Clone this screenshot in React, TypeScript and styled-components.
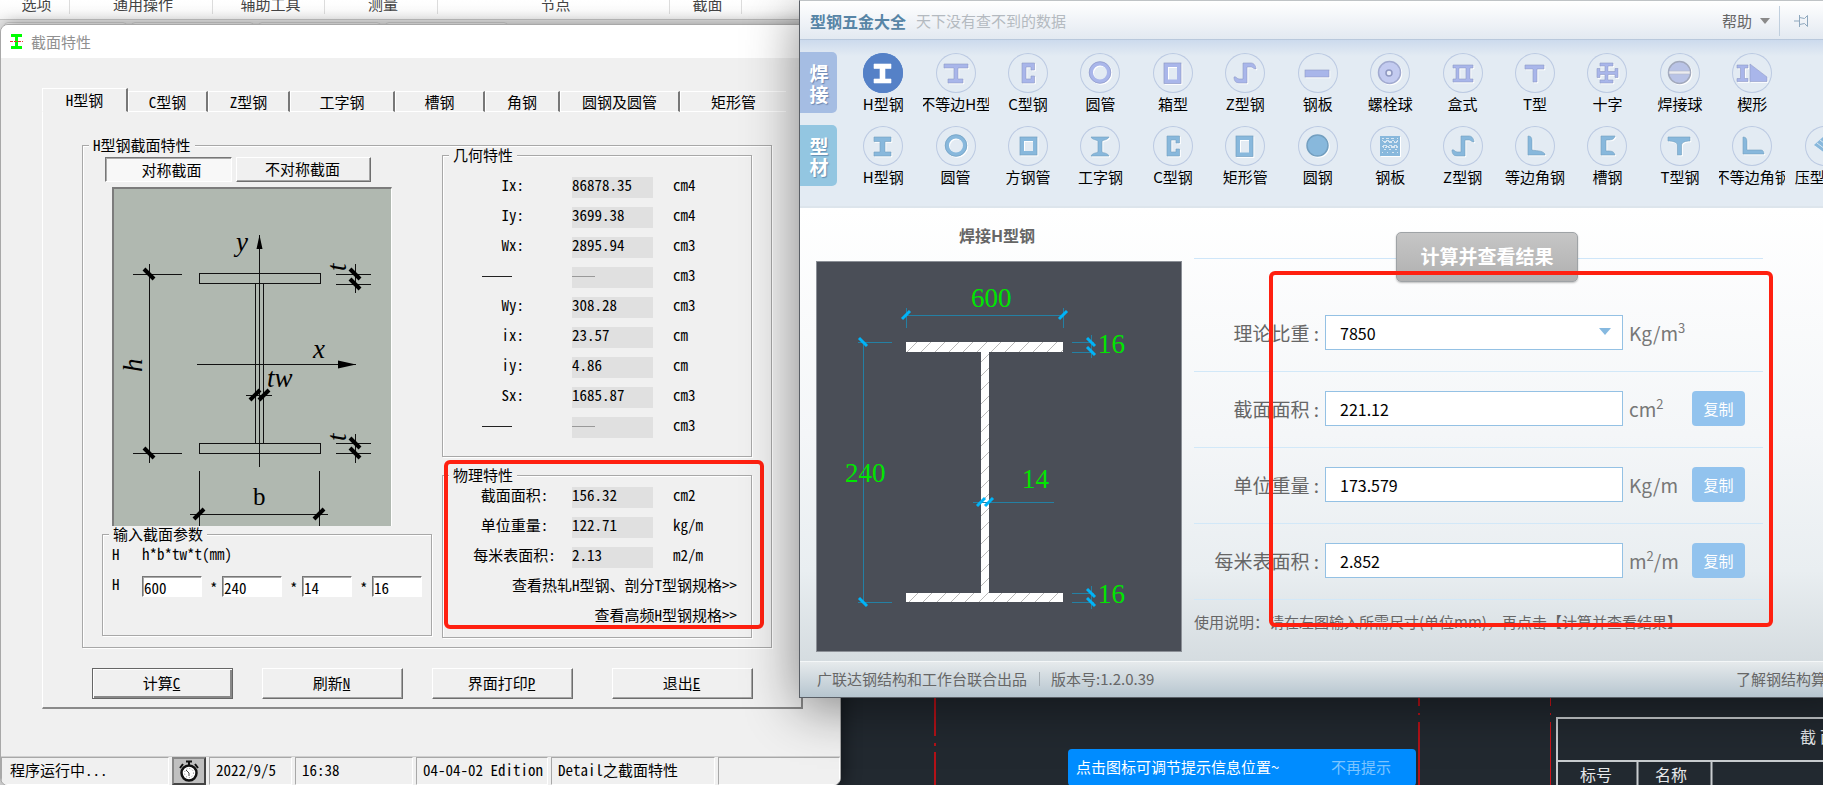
import React, { ReactNode } from "react";
import styled, { createGlobalStyle, css } from "styled-components";

const mono = `"Noto Sans Mono CJK SC", "Liberation Mono", "Noto Sans CJK SC", monospace`;
const sans = `"Noto Sans CJK SC", "Open Sans", sans-serif`;

const GlobalStyle = createGlobalStyle`
  *, *::before, *::after { box-sizing: border-box; }
  body { margin: 0; overflow: hidden; background: #222930; }
  button, input, select { font: inherit; color: inherit; margin: 0; }
  button { cursor: pointer; }
`;

/* ---------- desktop ---------- */

const Desktop = styled.main`
  position: relative;
  height: 100vh;
  overflow: hidden;
  background: #222930;
  font-family: ${sans};
  font-size: 15px;
  line-height: 20px;
`;

const HostApp = styled.div`
  position: absolute;
  left: 0;
  top: 0;
  bottom: 0;
  width: 569px;
  background: #d9d9d9;
`;

const Ribbon = styled.nav`
  position: absolute;
  left: 0;
  top: 0;
  width: 799px;
  height: 30px;
  background: #e6e6e6;
`;

const RibbonGroups = styled.div`
  display: grid;
  grid-template-columns: 70px 143px 112px 113px 232px 72px 1fr;
  height: 20px;
  overflow: hidden;
  background: linear-gradient(#fff, #f8f8f8);
  border-bottom: 1px solid #c8c8c8;
`;

const RibbonGroup = styled.span`
  height: 14px;
  padding-left: 4px;
  border-right: 1px solid #dcdcdc;
  text-align: center;
  line-height: 8px;
  color: #444;
  &:last-child { border: 0; }
`;

const DocTabs = styled.div`
  display: flex;
  gap: 4px;
  padding: 2px 4px 0;
`;

const DocTab = styled.span`
  width: 123px;
  height: 8px;
  border: 1px solid #cfcfcf;
  border-radius: 4px 4px 0 0;
  background: #f2f2f2;
`;

/* ---------- section property window ---------- */

const PropertyWindow = styled.section`
  position: absolute;
  left: 0;
  top: 24px;
  width: 841px;
  background: #f0f0f0;
  border: 1px solid #a8a8a8;
  border-radius: 8px;
  box-shadow: 4px 0 16px rgba(0, 0, 0, 0.4);
  overflow: hidden;
  font-family: ${mono};
  font-size: 15px;
  line-height: 16px;
  color: #000;
`;

const PropertyTitle = styled.header`
  display: flex;
  align-items: center;
  gap: 8px;
  height: 33px;
  padding-left: 9px;
  background: #fff;
  font-family: ${sans};
  color: #909090;
`;

const TabStrip = styled.div`
  display: grid;
  grid-template-columns: 86px 80px 82px 105px 90px 75px 120px 106px;
  align-items: end;
  height: 24px;
  margin: 30px 0 0 41px;
`;

const TabButton = styled.button<{ $active?: boolean }>`
  height: ${(p) => (p.$active ? 24 : 21)}px;
  padding: 0;
  border: 0;
  border-top: 1px solid #fff;
  border-left: 1px solid #fff;
  border-right: 2px solid #777;
  border-bottom: 1px solid ${(p) => (p.$active ? "#f0f0f0" : "#fff")};
  background: #f0f0f0;
  &:last-child { border-right: 0; }
`;

const TabPanel = styled.div`
  width: 761px;
  margin: 0 0 47px 41px;
  padding: 25px 29px 8px 39px;
  border-left: 1px solid #fff;
  border-right: 2px solid #8a8a8a;
  border-bottom: 2px solid #8a8a8a;
`;

const Group = styled.fieldset`
  min-width: 0;
  margin: 0;
  padding: 0;
  border: 1px solid #a8a8a8;
  box-shadow: 1px 1px 0 #fff, inset 1px 1px 0 #fff;
`;

const GroupBody = styled.div<{ $pad: string }>`
  padding: ${(p) => p.$pad};
`;

const GroupLegend = styled.legend`
  margin-left: 6px;
  padding: 0 4px;
  background: #f0f0f0;
  line-height: 16px;
`;

const Columns = styled.div`
  display: grid;
  grid-template-columns: 330fr 310fr;
  gap: 10px;
`;

const LeftColumn = styled.div`
  padding-top: 4px;
`;

const RightColumn = styled.div`
  display: flex;
  flex-direction: column;
  gap: 10px;
  margin-top: -6px;
`;

const Modes = styled.div`
  display: flex;
  gap: 4px;
  margin-left: 3px;
`;

const raised = css`
  border: 1px solid;
  border-color: #fff #6e6e6e #6e6e6e #fff;
  box-shadow: inset -1px -1px 0 #a5a5a5;
  background: #f0f0f0;
`;

const sunken = css`
  border: 1px solid;
  border-color: #777 #fff #fff #777;
  box-shadow: inset 1px 1px 0 #aaa;
`;

const ModeButton = styled.button<{ $on?: boolean }>`
  width: ${(p) => (p.$on ? 127 : 135)}px;
  height: 25px;
  padding: ${(p) => (p.$on ? "0 0 0 6px" : "0 2px 2px 0")};
  ${(p) => (p.$on ? css`${sunken} background: #f8f8f8;` : raised)}
`;

const Picture = styled.div`
  width: 280px;
  height: 339px;
  margin: 5px 0 0 10px;
  background: #b0b8b0;
  border-left: 2px solid #7c7c7c;
  border-top: 2px solid #7c7c7c;
  border-right: 1px solid #fff;
  svg { display: block; margin: -2px 0 0 -2px; }
`;

const ParamHint = styled.div`
  display: grid;
  grid-template-columns: 30px 1fr;
  margin-bottom: 14px;
`;

const ParamRow = styled.div`
  display: flex;
  height: 22px;
  > span { width: 30px; }
  > label { display: flex; }
  > label + label::before {
    content: "*";
    width: 20px;
    padding: 4px 0 0 8px;
  }
`;

const ParamInput = styled.input<{ $w: number }>`
  width: ${(p) => p.$w}px;
  height: 21px;
  padding: 2px 0 0 1px;
  border-radius: 0;
  outline: 0;
  ${sunken}
  background: #fff;
`;

const PropRow = styled.div`
  display: grid;
  grid-template-columns: 129px 81px 1fr;
  height: 21px;
  margin-bottom: 9px;
`;

const PropLabel = styled.label<{ $centered?: boolean }>`
  padding: ${(p) => (p.$centered ? "0 0 0 14px" : "0 48px 0 0")};
  text-align: ${(p) => (p.$centered ? "center" : "right")};
  white-space: nowrap;
`;

const PropValue = styled.output`
  background: #e0e0e0;
`;

const PropUnit = styled.span`
  padding-left: 20px;
`;

const Dash = styled.span<{ $w: number; $label?: boolean }>`
  display: inline-block;
  width: ${(p) => p.$w}px;
  height: 1px;
  margin-right: ${(p) => (p.$label ? 12 : 0)}px;
  vertical-align: 4px;
  background: ${(p) => (p.$label ? "#222" : "#999")};
`;

const SpecLink = styled.a`
  display: block;
  height: 30px;
  padding-right: 14px;
  text-align: right;
  text-decoration: none;
  color: #000;
`;

const Actions = styled.div`
  display: flex;
  gap: 29px;
  margin: 20px 0 0 10px;
`;

const ActionButton = styled.button<{ $primary?: boolean; $last?: boolean }>`
  width: 141px;
  height: 31px;
  margin-left: ${(p) => (p.$last ? 10 : 0)}px;
  padding: 0 2px 2px 0;
  ${raised}
  ${(p) => p.$primary && css`border-color: #666; box-shadow: inset 1px 1px 0 #fff, inset -2px -2px 0 #888;`}
`;

const StatusBar = styled.footer`
  display: grid;
  grid-template-columns: 168px 34px 83px 118px 132px 164px 1fr;
  column-gap: 3px;
  height: 29px;
  border-top: 1px solid #d0d0d0;
`;

const StatusCell = styled.span`
  padding: 4px 0 0 6px;
  border-top: 1px solid #a8a8a8;
  border-left: 1px solid #a8a8a8;
  border-right: 1px solid #fff;
  border-bottom: 1px solid #fff;
  white-space: nowrap;
  &:first-child { padding-left: 8px; }
`;

const StatusClock = styled.span`
  display: grid;
  place-items: center;
  background: #c0c0c0;
  border: 2px solid;
  border-color: #888 #444 #444 #888;
`;

/* ---------- steel catalogue window ---------- */

const CatalogWindow = styled.section`
  position: absolute;
  left: 799px;
  right: -38px;
  top: 0;
  border: 1px solid #5a5f66;
  border-top-color: #bfc3c6;
  border-right: 0;
  background: #fff;
  box-shadow: 0 10px 50px rgba(0, 0, 0, 0.45);
  color: #666;
`;

const CatalogTitle = styled.header`
  display: flex;
  align-items: center;
  height: 39px;
  padding: 1px 38px 0 10px;
  background: linear-gradient(#fff, #e3e9f1);
  border-bottom: 1px solid #b9c8dc;
`;

const AppName = styled.h1`
  margin: 0 10px 0 0;
  font-size: 16px;
  color: #5785a6;
`;

const Slogan = styled.span`
  flex: 1;
  color: #b4bac0;
`;

const HelpButton = styled.button`
  display: flex;
  align-items: center;
  gap: 8px;
  padding: 0 9px 0 0;
  border: 0;
  background: none;
`;

const PinButton = styled.button`
  display: flex;
  align-items: center;
  height: 30px;
  padding: 0 14px;
  border: 0;
  border-left: 1px solid #c0cfde;
  background: none;
`;

const Toolbar = styled.div`
  display: grid;
  gap: 12px;
  padding: 12px 0 20px;
  background: linear-gradient(#ccdaed, #e3ebf3 16px);
  border-bottom: 2px solid #dde5ec;
`;

const ToolRow = styled.div`
  display: flex;
  height: 61px;
`;

const Category = styled.button<{ $bg: string }>`
  width: 37px;
  margin-right: 10px;
  padding: 0 8px 0 9px;
  border: 0;
  border-radius: 0 5px 5px 0;
  background: ${(p) => p.$bg};
  color: #fff;
  font-size: 19px;
  font-weight: 700;
  line-height: 21px;
  text-shadow: 1px 1px 1px rgba(40, 70, 120, 0.45);
`;

const Tools = styled.div`
  flex: 1;
  display: grid;
  grid-template-columns: repeat(14, 1fr);
`;

const Tool = styled.button`
  display: flex;
  flex-direction: column;
  align-items: center;
  padding: 1px 0 0;
  border: 0;
  background: none;
  color: #000;
`;

const ToolCircle = styled.span<{ $active?: boolean }>`
  width: 40px;
  height: 40px;
  border-radius: 50%;
  box-shadow: inset 0 0 0 1px ${(p) => (p.$active ? "#5581c7" : "#bccae2")};
  background: ${(p) => (p.$active ? "#5581c7" : "none")};
  svg { display: block; filter: ${(p) => (p.$active ? "none" : "drop-shadow(1px 1px 0 #fff)")}; }
`;

const ToolLabel = styled.span`
  display: flex;
  justify-content: center;
  width: 66px;
  margin-top: 2px;
  overflow: hidden;
  line-height: 18px;
  white-space: nowrap;
`;

const Workspace = styled.div`
  display: flex;
  padding: 17px 98px 9px 16px;
  background: linear-gradient(#fff 0%, #f4f6f8 50%, #e9eef1 80%, #d5dce0 100%);
`;

const Preview = styled.div`
  width: 366px;
  margin-right: 12px;
`;

const PreviewTitle = styled.h2`
  margin: 0 0 16px;
  padding-right: 4px;
  font-size: 16px;
  line-height: 20px;
  text-align: center;
`;

const Canvas = styled.div`
  height: 391px;
  background: #4a4e57;
  box-shadow: inset 0 0 0 1px #8b8f96;
  svg { display: block; }
`;

const Calculator = styled.form`
  flex: 1;
  padding-top: 7px;
`;

const CalcHeader = styled.div`
  display: flex;
  justify-content: center;
  margin-bottom: 14px;
  padding-left: 17px;
  background: linear-gradient(#cfe6f9, #cfe6f9) 0 26px / 100% 1px no-repeat;
`;

const CalcButton = styled.button`
  width: 182px;
  height: 50px;
  padding: 0 0 2px;
  border: 1px solid #9fa3a6;
  border-radius: 5px;
  background: linear-gradient(#c6c6c6, #b0b0b0);
  box-shadow: 0 1px 2px rgba(0, 0, 0, 0.25);
  color: #fff;
  font-size: 19px;
  font-weight: 700;
`;

const FieldRow = styled.div`
  display: flex;
  align-items: center;
  height: 76px;
  border-bottom: 1px solid #d2e8f8;
  padding: 0 18px 2px 0;
  font-size: 19px;
`;

const FieldLabel = styled.label`
  width: 131px;
  padding-right: 6px;
  text-align: right;
  white-space: pre;
`;

const fieldBox = css`
  width: 100%;
  height: 35px;
  padding: 0 14px;
  border: 1px solid #94c1e4;
  border-radius: 0;
  outline: 0;
  background: #fff;
  color: #000;
  font-size: 16px;
`;

const FieldWrap = styled.div`
  position: relative;
  flex: 1;
  svg { position: absolute; right: 12px; top: 13px; pointer-events: none; }
`;

const FieldInput = styled.input`${fieldBox}`;
const FieldSelect = styled.select`${fieldBox} appearance: none;`;

const FieldUnit = styled.span`
  width: 69px;
  padding-left: 6px;
  color: #777;
  sup { font-size: 13px; line-height: 0; vertical-align: 8px; }
`;

const CopySlot = styled.div`
  width: 53px;
`;

const CopyButton = styled.button`
  width: 53px;
  height: 35px;
  padding: 0;
  border: 0;
  border-radius: 4px;
  background: #92c3ee;
  color: #fff;
  font-size: 15px;
`;

const Note = styled.p`
  margin: 12px 0 0;
  white-space: nowrap;
`;

const CatalogFooter = styled.footer`
  display: flex;
  align-items: center;
  height: 36px;
  padding: 0 35px 2px 17px;
  border-top: 1px solid #f4f7f8;
  background: linear-gradient(#e6eaec, #b6c5cf);
`;

const Version = styled.span`
  flex: 1;
  margin-left: 12px;
  padding-left: 11px;
  border-left: 1px solid #a5adb3;
  line-height: 14px;
`;

const FooterLink = styled.a`
  color: #666;
  text-decoration: none;
`;

/* ---------- overlays ---------- */

const Highlight = styled.div<{ $x: number; $y: number; $w: number; $h: number }>`
  position: absolute;
  left: ${(p) => p.$x}px;
  top: ${(p) => p.$y}px;
  width: ${(p) => p.$w}px;
  height: ${(p) => p.$h}px;
  border: 4px solid #ff2010;
  border-radius: 6px;
  pointer-events: none;
`;

const CadDrawing = styled.svg`
  position: absolute;
  left: 841px;
  top: 698px;
`;

const Toast = styled.div`
  position: absolute;
  left: 1068px;
  top: 749px;
  display: flex;
  align-items: center;
  justify-content: space-between;
  width: 348px;
  height: 37px;
  padding: 0 25px 2px 8px;
  border-radius: 4px;
  background: #008cff;
  color: #fff;
`;

const ToastDismiss = styled.button`
  padding: 0;
  border: 0;
  background: none;
  color: #7cc4ff;
`;

/* ---------- icons ---------- */

type IconKind =
  | "h" | "hUneven" | "c" | "ring" | "box" | "z" | "plate" | "bolt" | "double" | "t" | "cross"
  | "ball" | "wedge" | "square" | "i" | "disc" | "mesh" | "l" | "channel" | "tRolled" | "lShort" | "sheet";

const meshDots = Array.from({ length: 90 }, (_, i) => [12 + ((i * 37) % 16), 12 + ((i * i * 5 + i * 3) % 17)]);

function glyph(kind: IconKind, c: string, edge: string): ReactNode {
  const f = { fill: c, stroke: edge, strokeWidth: 0.6 };
  const s = { fill: "none", stroke: c, strokeWidth: 4 };
  switch (kind) {
    case "h": return <path {...f} d="M11 11h17v4.500h-6v10.500h6v4H11v-4h6V15.500h-6z" />;
    case "hUneven": return <path {...f} d="M8 11h24v4H22v11h5v4H12v-4h6V15H8z" />;
    case "c": return <path {...f} d="M14 10h12.500v7H23v-3h-5v12h5v-3h3.500v7H14z" />;
    case "ring": return <><circle cx="20" cy="19.500" r="9" {...s} /><circle cx="20" cy="19.500" r="10.800" fill="none" stroke={edge} strokeWidth=".7" /></>;
    case "box": return <><rect x="13" y="12" width="13" height="16.500" {...s} /><rect x="11" y="10" width="17" height="20.500" fill="none" stroke={edge} strokeWidth=".7" /></>;
    case "square": return <><rect x="14" y="13" width="13" height="14" {...s} /><rect x="12" y="11" width="17" height="18" fill="none" stroke={edge} strokeWidth=".7" /></>;
    case "z": return <path {...f} d="M9 24c2-1 3 2 5 2h4V10h8c3 0 5 3 5 6-3 0-3-2-5-2h-4v16h-8c-3 0-5-2-5-6z" />;
    case "plate": return <rect x="7" y="17" width="24" height="7" {...f} />;
    case "bolt": return <><circle cx="19.500" cy="19.500" r="11" fill="#c3cbf0" stroke="#a2abd0" strokeWidth="1.500" /><circle cx="19" cy="20" r="3" fill="#e8ecf8" stroke="#8f98c0" strokeWidth="1.500" /></>;
    case "double": return <path {...f} d="M10 12h20v3h-3v11h3v3H10v-3h3V15h-3zM16 15v11h7V15z" fillRule="evenodd" />;
    case "t": return <path {...f} d="M10 12h19v4h-7v13h-4V16h-8z" />;
    case "tRolled": return <path {...f} d="M8 11h22v4c-4 0-8 1-8.500 4v10h-4V19c-.5-3-5-4-9.500-4z" />;
    case "cross": return <path {...f} d="M13 10h13v3h-5v5.500h7v-3h3v9h-3v-3h-7V27h5v3H13v-3h5v-5.500h-5v3h-3v-9h3v3h5V13h-5z" />;
    case "ball": return <><circle cx="19.500" cy="19.500" r="11" fill="#b9c3e6" stroke="#a2a9bc" strokeWidth="1.500" /><path d="M9 18h21v3H9z" fill="#ececf0" stroke="#b4bacb" strokeWidth=".6" /></>;
    case "wedge": return <path {...f} d="M5 12h11v3h-3.500v10.500H16v3H5v-3h3.500V15H5zM18 11l17 13v4.500H18z" />;
    case "i": return <path {...f} d="M11 11h18c-1 3-6 3-7 4v11c1 1 6 1 7 4H11c1-3 6-3 7-4V15c-1-1-6-1-7-4z" />;
    case "disc": return <circle cx="19.500" cy="19.500" r="10.500" {...f} strokeWidth="1.500" />;
    case "mesh": return <><rect x="10" y="10" width="20" height="20" fill={c} />{meshDots.map(([x, y], i) => <rect key={i} x={x} y={y} width="1" height="1" fill="#d6e6f2" />)}</>;
    case "l": return <path {...f} d="M13 10c3 0 4 2 4 4v10c3 1 10 0 13 4v1H13z" />;
    case "lShort": return <path {...f} d="M11 11c3 0 4 2 4 4v9h14c2 0 3 2 3 4H11z" />;
    case "channel": return <path {...f} d="M14 10h14c-1 4-4 4-9 4v11c5 0 8 0 9 4H14z" />;
    case "sheet": return <><path d="M9 19l10-9 16 12-10 9z" fill={c} /><path d="M12 17l16 12M15 14l16 12M18 11l16 12" stroke="#d6e6f2" strokeWidth="1" /></>;
  }
}

function ToolItem({ kind, label, rolled, active }: { kind: IconKind; label: string; rolled?: boolean; active?: boolean }) {
  const color = active ? "#fff" : rolled ? "#88b8dc" : "#a9b6ea";
  const edge = active ? "#fff" : rolled ? "#739fc0" : "#8f9ac6";
  return (
    <Tool type="button">
      <ToolCircle $active={active}>
        <svg width="40" height="40" aria-hidden="true">{glyph(kind, color, edge)}</svg>
      </ToolCircle>
      <ToolLabel>{label}</ToolLabel>
    </Tool>
  );
}

const welded: [IconKind, string][] = [
  ["h", "H型钢"], ["hUneven", "不等边H型"], ["c", "C型钢"], ["ring", "圆管"], ["box", "箱型"], ["z", "Z型钢"], ["plate", "钢板"],
  ["bolt", "螺栓球"], ["double", "盒式"], ["t", "T型"], ["cross", "十字"], ["ball", "焊接球"], ["wedge", "楔形"],
];

const rolledSteel: [IconKind, string][] = [
  ["h", "H型钢"], ["ring", "圆管"], ["square", "方钢管"], ["i", "工字钢"], ["c", "C型钢"], ["box", "矩形管"], ["disc", "圆钢"],
  ["mesh", "钢板"], ["z", "Z型钢"], ["l", "等边角钢"], ["channel", "槽钢"], ["tRolled", "T型钢"], ["lShort", "不等边角钢"], ["sheet", "压型钢板"],
];

/* ---------- drawings ---------- */

function Ticks({ at, back, size = 6 }: { at: [number, number][]; back?: boolean; size?: number }) {
  return <>{at.map(([x, y], i) => (
    <path key={i} d={back ? `M${x - size} ${y - size}l${size * 2} ${size * 2}` : `M${x - size} ${y + size}l${size * 2} ${-size * 2}`} />
  ))}</>;
}

function SectionSketch() {
  return (
    <svg width="278" height="339" fontFamily='"Liberation Serif", serif' fontSize="27" fontStyle="italic">
      <g fill="none" stroke="#111" strokeWidth="1" shapeRendering="crispEdges">
        <path d="M147.500 48V280M87.500 86.500h121v10h-121zM87.500 256.500h121v10h-121zM143.500 97V256M151.500 97V256" />
        <path d="M37.500 77V276M21 87.500H70M21 266.500H70M85 177.500H244M134 208.500H160" />
        <path d="M243.500 77V106M224 87.500H259M224 97.500H259M243.500 247V276M224 256.500H259M224 266.500H259" />
        <path d="M78 327.500H216M87.500 284V339M207.500 284V339" />
      </g>
      <path d="M147.500 48l3 14h-6zM244 177.500l-18 4v-8z" />
      <g stroke="#000" strokeWidth="4">
        <Ticks back size={5} at={[[37, 87], [37, 266], [243, 87], [243, 97], [243, 256], [243, 266]]} />
        <Ticks size={5} at={[[143, 208], [152, 208], [87, 327], [207, 327]]} />
      </g>
      <text x="124" y="64">y</text>
      <text x="201" y="171">x</text>
      <text x="155" y="200">tw</text>
      <text x="141" y="318" fontStyle="normal" fontSize="25">b</text>
      <text transform="translate(30 185) rotate(-90)">h</text>
      <text transform="translate(234 84) rotate(-90)">t</text>
      <text transform="translate(234 254) rotate(-90)">t</text>
    </svg>
  );
}

function SteelPreview() {
  return (
    <svg width="366" height="391" fontFamily='"Liberation Serif", serif' fontSize="27">
      <defs>
        <pattern id="hatch" width="14" height="14" patternUnits="userSpaceOnUse">
          <rect width="14" height="14" fill="#fff" />
          <path d="M-1 15L15 -1" stroke="#b8b8b8" strokeWidth="1" />
        </pattern>
      </defs>
      <path d="M90 81h157v10h-74v241h74v9H90v-9h75V91H90z" fill="url(#hatch)" />
      <g fill="none" stroke="#2480a4" strokeWidth="1" shapeRendering="crispEdges">
        <path d="M90 54.500H247M90.500 47V67M247.500 47V67M47.500 81V341M42 81.500H76M42 341.500H76" />
        <path d="M256 81.500H278M256 91.500H278M275.500 74V97M256 332.500H278M256 341.500H278M275.500 325V348M157 241.500H238" />
      </g>
      <g stroke="#00b4f8" strokeWidth="3">
        <Ticks size={4} at={[[90, 54], [247, 54], [165, 241], [173, 241]]} />
        <Ticks back size={4} at={[[47, 81], [47, 341], [275, 81], [275, 90], [275, 332], [275, 341]]} />
      </g>
      <g fill="#00e600">
        <text x="155" y="46">600</text>
        <text x="29" y="221">240</text>
        <text x="206" y="227">14</text>
        <text x="282" y="92">16</text>
        <text x="282" y="342">16</text>
      </g>
    </svg>
  );
}

function CadTable() {
  return (
    <CadDrawing width="982" height="87" fontFamily={sans}>
      <g stroke="#b51218" strokeWidth="2" fill="none">
        <path d="M94 0V38M94 45v3M94 54V87M578 0V8M578 15v2M578 24V87" />
        <path d="M709.500 0V8M709.500 15v2M709.500 24V87" strokeWidth="1" stroke="#d0141a" />
      </g>
      <path d="M982 20H716V87M716 63H982M796.500 63V87M870.500 63V87" stroke="#c9cdd0" strokeWidth="2" fill="none" />
      <g fill="#e6e8ea" fontSize="16">
        <text x="959" y="45">截</text>
        <text x="979" y="45">面</text>
        <text x="739" y="83">标号</text>
        <text x="814" y="83">名称</text>
      </g>
    </CadDrawing>
  );
}

/* ---------- data ---------- */

const geometry: [string, string, string][] = [
  ["Ix:", "86878.35", "cm4"], ["Iy:", "3699.38", "cm4"], ["Wx:", "2895.94", "cm3"], ["", "", "cm3"], ["Wy:", "308.28", "cm3"],
  ["ix:", "23.57", "cm"], ["iy:", "4.86", "cm"], ["Sx:", "1685.87", "cm3"], ["", "", "cm3"],
];

const physics: [string, string, string][] = [
  ["截面面积:", "156.32", "cm2"], ["单位重量:", "122.71", "kg/m"], ["每米表面积:", "2.13", "m2/m"],
];

const results: [string, string, ReactNode][] = [
  ["截面面积", "221.12", <>cm<sup>2</sup></>],
  ["单位重量", "173.579", <>Kg/m</>],
  ["每米表面积", "2.852", <>m<sup>2</sup>/m</>],
];

const params: [string, string, number][] = [["h", "600", 60], ["b", "240", 60], ["tw", "14", 50], ["t", "16", 50]];

function PropList({ rows, centered, name }: { rows: [string, string, string][]; centered?: boolean; name: string }) {
  return <>{rows.map(([label, value, unit], i) => (
    <PropRow key={i}>
      <PropLabel $centered={centered} htmlFor={`${name}-${i}`}>{label || <Dash $w={30} $label />}</PropLabel>
      <PropValue id={`${name}-${i}`}>{value || <Dash $w={23} />}</PropValue>
      <PropUnit>{unit}</PropUnit>
    </PropRow>
  ))}</>;
}

export default function App() {
  return (
    <Desktop>
      <GlobalStyle />
      <HostApp />
      <Ribbon>
        <RibbonGroups>
          {["选项", "通用操作", "辅助工具", "测量", "节点", "截面", ""].map((t, i) => <RibbonGroup key={i}>{t}</RibbonGroup>)}
        </RibbonGroups>
        <DocTabs><DocTab /><DocTab /><DocTab /><DocTab /></DocTabs>
      </Ribbon>
      <CadTable />

      <PropertyWindow>
        <PropertyTitle>
          <svg width="13" height="16" aria-hidden="true">
            <path d="M1 0h11v3H8v9h4v3H1v-3h4V3H1z" fill="#0f0" />
            <path d="M0 7.500h13" stroke="#f03030" strokeDasharray="3 1" />
          </svg>
          截面特性
        </PropertyTitle>
        <TabStrip role="tablist">
          {["H型钢", "C型钢", "Z型钢", "工字钢", "槽钢", "角钢", "圆钢及圆管", "矩形管"].map((t, i) => (
            <TabButton key={t} type="button" role="tab" aria-selected={i === 0} $active={i === 0}>{t}</TabButton>
          ))}
        </TabStrip>
        <TabPanel role="tabpanel">
          <Group>
            <GroupLegend>H型钢截面特性</GroupLegend>
            <GroupBody $pad="0 19px 9px">
              <Columns>
                <LeftColumn>
                  <Modes>
                    <ModeButton type="button" $on>对称截面</ModeButton>
                    <ModeButton type="button">不对称截面</ModeButton>
                  </Modes>
                  <Picture><SectionSketch /></Picture>
                  <Group>
                    <GroupLegend>输入截面参数</GroupLegend>
                    <GroupBody $pad="4px 9px 37px">
                      <ParamHint><span>H</span><span>h*b*tw*t(mm)</span></ParamHint>
                      <ParamRow>
                        <span>H</span>
                        {params.map(([name, value, w]) => (
                          <label key={name}><ParamInput aria-label={name} defaultValue={value} $w={w} /></label>
                        ))}
                      </ParamRow>
                    </GroupBody>
                  </Group>
                </LeftColumn>
                <RightColumn>
                  <Group>
                    <GroupLegend>几何特性</GroupLegend>
                    <GroupBody $pad="14px 0 9px">
                      <PropList rows={geometry} name="geometry" />
                    </GroupBody>
                  </Group>
                  <Group>
                    <GroupLegend>物理特性</GroupLegend>
                    <GroupBody $pad="4px 0 0">
                      <PropList rows={physics} centered name="physics" />
                      <SpecLink href="#hot">查看热轧H型钢、剖分T型钢规格&gt;&gt;</SpecLink>
                      <SpecLink href="#hf">查看高频H型钢规格&gt;&gt;</SpecLink>
                    </GroupBody>
                  </Group>
                </RightColumn>
              </Columns>
            </GroupBody>
          </Group>
          <Actions>
            <ActionButton type="button" $primary>计算<u>C</u></ActionButton>
            <ActionButton type="button">刷新<u>N</u></ActionButton>
            <ActionButton type="button">界面打印<u>P</u></ActionButton>
            <ActionButton type="button" $last>退出<u>E</u></ActionButton>
          </Actions>
        </TabPanel>
        <StatusBar>
          <StatusCell>程序运行中...</StatusCell>
          <StatusClock>
            <svg width="24" height="24" aria-hidden="true" fill="none" stroke="#111">
              <circle cx="12" cy="14" r="7.500" fill="#fff" strokeWidth="2.500" />
              <circle cx="12" cy="14" r="4.500" stroke="#888" strokeDasharray="1 2" />
              <path d="M12 14l-3-3M12 14v3" stroke="#444" />
              <path d="M12 3v4M9 2.500h6M6 5L3 9M18 5l3 4" strokeWidth="2" />
            </svg>
          </StatusClock>
          <StatusCell>2022/9/5</StatusCell>
          <StatusCell>16:38</StatusCell>
          <StatusCell>04-04-02 Edition</StatusCell>
          <StatusCell>Detail之截面特性</StatusCell>
          <StatusCell />
        </StatusBar>
      </PropertyWindow>
      <Highlight $x={444} $y={460} $w={320} $h={169} />

      <CatalogWindow>
        <CatalogTitle>
          <AppName>型钢五金大全</AppName>
          <Slogan>天下没有查不到的数据</Slogan>
          <HelpButton type="button">
            帮助
            <svg width="10" height="6" aria-hidden="true"><path d="M0 0h10L5 6z" fill="#8a8a8a" /></svg>
          </HelpButton>
          <PinButton type="button" aria-label="固定">
            <svg width="15" height="14" aria-hidden="true" fill="none" stroke="#8fa8be">
              <path d="M0 7h5M5.500 1v12M5.500 3.500l5 1 3-3v11l-3-3-5 1" />
            </svg>
          </PinButton>
        </CatalogTitle>
        <Toolbar>
          <ToolRow>
            <Category type="button" $bg="#a5bde3">焊接</Category>
            <Tools>{welded.map(([kind, label], i) => <ToolItem key={label} kind={kind} label={label} active={i === 0} />)}</Tools>
          </ToolRow>
          <ToolRow>
            <Category type="button" $bg="#93c6e1">型材</Category>
            <Tools>{rolledSteel.map(([kind, label]) => <ToolItem key={label} kind={kind} label={label} rolled />)}</Tools>
          </ToolRow>
        </Toolbar>
        <Workspace>
          <Preview>
            <PreviewTitle>焊接H型钢</PreviewTitle>
            <Canvas><SteelPreview /></Canvas>
          </Preview>
          <Calculator onSubmit={(e) => e.preventDefault()}>
            <CalcHeader><CalcButton>计算并查看结果</CalcButton></CalcHeader>
            <FieldRow>
              <FieldLabel htmlFor="density">理论比重 :</FieldLabel>
              <FieldWrap>
                <FieldSelect id="density"><option>7850</option></FieldSelect>
                <svg width="12" height="7" aria-hidden="true"><path d="M0 0h12L6 7z" fill="#86b9e0" /></svg>
              </FieldWrap>
              <FieldUnit>Kg/m<sup>3</sup></FieldUnit>
              <CopySlot />
            </FieldRow>
            {results.map(([label, value, unit], i) => (
              <FieldRow key={label}>
                <FieldLabel htmlFor={`result-${i}`}>{label} :</FieldLabel>
                <FieldWrap><FieldInput id={`result-${i}`} defaultValue={value} /></FieldWrap>
                <FieldUnit>{unit}</FieldUnit>
                <CopySlot><CopyButton type="button">复制</CopyButton></CopySlot>
              </FieldRow>
            ))}
            <Note>使用说明：请在左图输入所需尺寸(单位mm)，再点击【计算并查看结果】</Note>
          </Calculator>
        </Workspace>
        <CatalogFooter>
          <span>广联达钢结构和工作台联合出品</span>
          <Version>版本号:1.2.0.39</Version>
          <FooterLink href="#about">了解钢结构算</FooterLink>
        </CatalogFooter>
      </CatalogWindow>
      <Highlight $x={1269} $y={271} $w={504} $h={356} />

      <Toast>
        <span>点击图标可调节提示信息位置~</span>
        <ToastDismiss type="button">不再提示</ToastDismiss>
      </Toast>
    </Desktop>
  );
}
